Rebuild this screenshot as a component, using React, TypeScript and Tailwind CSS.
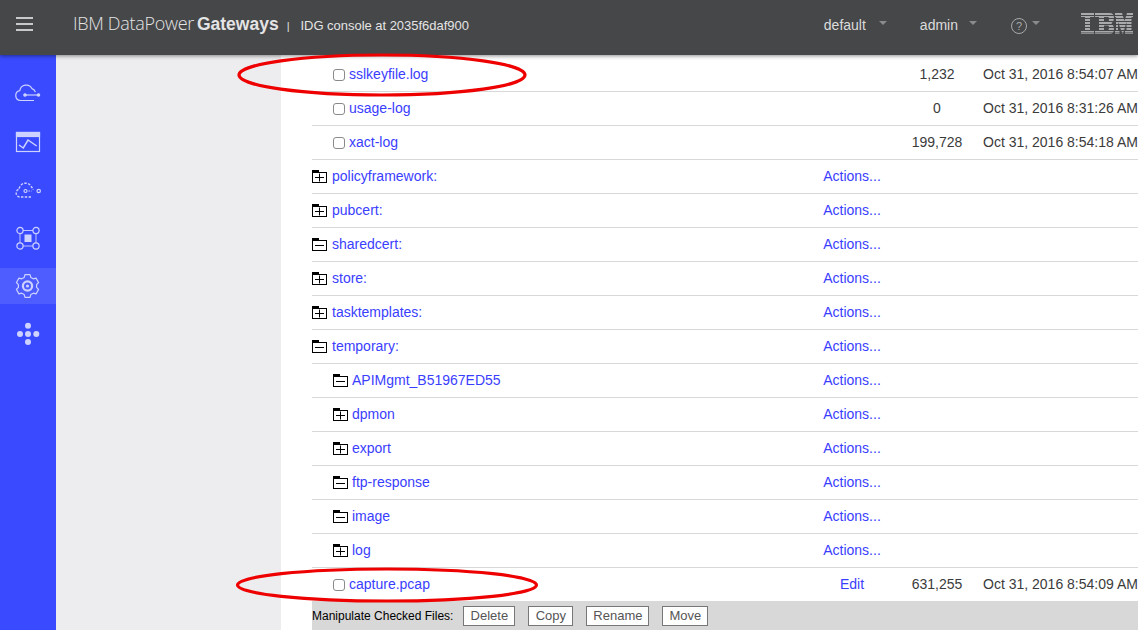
import React from "react";

const Folder = ({ open }: { open: boolean }) => (
  <svg width="15" height="13" viewBox="0 0 15 13" className="shrink-0">
    <rect x="0" y="0" width="7" height="2" fill="#000" />
    <rect x="0.5" y="2.5" width="14" height="10" fill="#fff" stroke="#000" />
    <path d="M3 7.5h9" stroke="#000" />
    {open && <path d="M7.5 3.5v8" stroke="#000" />}
  </svg>
);

type Row = { k: "file" | "dir"; n: string; indent?: number; plus?: boolean; size?: string; date?: string; action?: string };

const rows: Row[] = [
  { k: "file", n: "sslkeyfile.log", size: "1,232", date: "Oct 31, 2016 8:54:07 AM" },
  { k: "file", n: "usage-log", size: "0", date: "Oct 31, 2016 8:31:26 AM" },
  { k: "file", n: "xact-log", size: "199,728", date: "Oct 31, 2016 8:54:18 AM" },
  { k: "dir", n: "policyframework:", plus: true },
  { k: "dir", n: "pubcert:", plus: true },
  { k: "dir", n: "sharedcert:" },
  { k: "dir", n: "store:", plus: true },
  { k: "dir", n: "tasktemplates:", plus: true },
  { k: "dir", n: "temporary:" },
  { k: "dir", n: "APIMgmt_B51967ED55", indent: 1 },
  { k: "dir", n: "dpmon", indent: 1, plus: true },
  { k: "dir", n: "export", indent: 1, plus: true },
  { k: "dir", n: "ftp-response", indent: 1 },
  { k: "dir", n: "image", indent: 1 },
  { k: "dir", n: "log", indent: 1, plus: true },
  { k: "file", n: "capture.pcap", size: "631,255", date: "Oct 31, 2016 8:54:09 AM", action: "Edit" },
];

const SideIcon = ({ children, active }: { children: React.ReactNode; active?: boolean }) => (
  <div className="h-12 flex items-center">
    <div className={"h-9 w-full flex items-center justify-center " + (active ? "bg-[#4d5dff]" : "")}>
      <svg width="28" height="28" viewBox="0 0 28 28" fill="none" stroke="#cdd2ff" strokeWidth="1.2">
        {children}
      </svg>
    </div>
  </div>
);

const gearPath = (() => {
  const pts: string[] = [];
  const teeth = 6;
  for (let i = 0; i < teeth; i++) {
    const a = (i * Math.PI * 2) / teeth - Math.PI / 2;
    const step = Math.PI / teeth;
    const seq: [number, number][] = [
      [a - step * 0.42, 11.6],
      [a + step * 0.42, 11.6],
      [a + step * 0.7, 9.2],
      [a + step * 1.3, 9.2],
    ];
    seq.forEach(([t, r]) => {
      pts.push(`${(13.5 + r * Math.cos(t)).toFixed(2)} ${(14 + r * Math.sin(t)).toFixed(2)}`);
    });
  }
  return "M" + pts.join("L") + "Z";
})();

const Caret = ({ cls }: { cls: string }) => (
  <span className={`${cls} w-0 h-0 border-x-[4px] border-x-transparent border-t-[4px] border-t-[#8a8b8d] -translate-y-[3px]`} />
);

const IbmLogo = () => (
  <svg width="52" height="21" viewBox="0 0 52 21" className="ml-[41px] mr-[5px] -translate-y-[2px]">
    <g fill="#a9aaac">
      <path d="M0 0h13v4h-4v13h4v4H0v-4h4V4H0z" />
      <path d="M14 0h14.5q4.5 0 4.5 5 0 3.500-2.500 5.500 2.500 2 2.500 5.500 0 5-4.500 5H14v-4h4V4h-4zM23 4v4.500h4q1 0 1-2.250T27 4zM23 12.500V17h4q1 0 1-2.250t-1-2.250z" fillRule="evenodd" />
      <path d="M34 0h7l2.500 8L46 0h6v4h-1.500v13H52v4h-8v-4h1.500V9L42 21h-.5L37 9v8h1.500v4H34v-4h1V4h-1z" />
    </g>
    <g fill="#464749">
      <rect y="2" width="52" height="1" />
      <rect y="5" width="52" height="1" />
      <rect y="8" width="52" height="1" />
      <rect y="11" width="52" height="1" />
      <rect y="14" width="52" height="1" />
      <rect y="17" width="52" height="1" />
      <rect y="19.500" width="52" height="0.800" />
    </g>
  </svg>
);

export default function App() {
  return (
    <div className="w-[1138px] h-[630px] overflow-hidden relative flex flex-col bg-white font-['Liberation_Sans',Arial,sans-serif]">
      <header className="h-[55px] pb-[7px] shrink-0 bg-[#464749] flex items-center relative z-10 shadow-[0_1px_4px_rgba(0,0,0,0.45)] text-[#e4e4e4]">
        <div className="w-[68px] pl-4 flex flex-col gap-1 shrink-0">
          <span className="block w-[17px] h-[2px] bg-[#c9c9c9]" />
          <span className="block w-[17px] h-[2px] bg-[#c9c9c9]" />
          <span className="block w-[17px] h-[2px] bg-[#c9c9c9]" />
        </div>
        <div className="ml-[5px] flex items-baseline whitespace-nowrap">
          <span className="text-[18px] font-light tracking-[-0.3px] font-['Open_Sans','Liberation_Sans',sans-serif]">IBM DataPower </span>
          <span className="text-[17.5px] font-bold ml-[3px]">Gateways</span>
          <span className="text-[11px] ml-[8px] mr-[11px]">|</span>
          <span className="text-[13px] tracking-[-0.03px]">IDG console at 2035f6daf900</span>
        </div>
        <div className="ml-auto pt-[3px] flex items-center text-[14px] text-[#dcdcdc]">
          <span>default</span>
          <Caret cls="ml-[13px]" />
          <span className="ml-[33px]">admin</span>
          <Caret cls="ml-[11px]" />
          <svg width="18" height="18" viewBox="0 0 18 18" className="ml-[33px]" fill="none" stroke="#a8a9ab">
            <circle cx="9" cy="9" r="7.500" />
            <text x="9" y="13" textAnchor="middle" fontSize="11" fill="#a8a9ab" stroke="none">?</text>
          </svg>
          <Caret cls="ml-[4px]" />
          <IbmLogo />
        </div>
      </header>

      <div className="flex flex-1 min-h-0">
        <aside className="w-[56px] shrink-0 bg-[#3a4bff] pt-[15px]">
          <SideIcon>
            <path d="M20 20.500H6.500a5 5 0 0 1-.7-9.900A6.500 6.500 0 0 1 18 8.600a5 5 0 0 1 3.400 3.600" />
            <path d="M11 15h15" />
            <circle cx="11" cy="15" r="1.200" fill="#cdd2ff" />
            <circle cx="24.500" cy="15" r="1.200" fill="#cdd2ff" />
          </SideIcon>
          <SideIcon>
            <rect x="2.500" y="4.500" width="23" height="19" />
            <rect x="2.500" y="4.500" width="23" height="4" fill="#cdd2ff" />
            <path d="M5 17l4.300 3L14 12l8.700 6" strokeWidth="1.500" />
          </SideIcon>
          <SideIcon>
            <path d="M17 21H5.500a4 4 0 0 1-.4-7.800A6.500 6.500 0 0 1 17.500 11a5 5 0 0 1 1.500 3" strokeDasharray="2.400 1.400" strokeWidth="1.400" />
            <circle cx="11.500" cy="15" r="1.500" />
            <path d="M14.500 15h3" strokeDasharray="1.400 1" />
            <circle cx="24.700" cy="15" r="1.700" />
          </SideIcon>
          <SideIcon>
            <circle cx="6" cy="6.500" r="3.100" />
            <circle cx="22" cy="6.500" r="3.100" />
            <circle cx="6" cy="22" r="3.100" />
            <circle cx="22" cy="22" r="3.100" />
            <path d="M9 6.500h10M9 22h10M6 9.500v9.500M22 9.500v9.500" strokeWidth="0.900" />
            <rect x="10.500" y="10.500" width="7" height="7.500" fill="#cdd2ff" stroke="none" />
          </SideIcon>
          <SideIcon active>
            <path d={gearPath} strokeLinejoin="round" />
            <circle cx="13.500" cy="14" r="4.600" strokeWidth="2.200" />
            <circle cx="13.500" cy="14" r="1.600" fill="#cdd2ff" stroke="none" />
          </SideIcon>
          <SideIcon>
            <g fill="#cdd2ff" stroke="none">
              <circle cx="14" cy="5.700" r="3" />
              <circle cx="14" cy="14" r="3" />
              <circle cx="14" cy="22" r="3" />
              <circle cx="6" cy="14" r="3" />
              <circle cx="22.300" cy="14" r="3" />
            </g>
          </SideIcon>
        </aside>

        <div className="w-[225px] shrink-0 bg-[#ededf0]" />

        <main className="flex-1 min-w-0 pl-[31px] pt-[3px] overflow-hidden text-[14px] text-[#3b3b3b]">
          {rows.map((r) => (
            <div
              key={r.n}
              className={
                "grid grid-cols-[500px_80px_90px_1fr] items-center whitespace-nowrap " +
                (r.n === "capture.pcap" ? "h-[33px]" : "h-[34px] border-b border-[#d8d8d8]")
              }
            >
              <div className={"flex items-center " + (r.k === "file" ? "pl-[21px] gap-[4px]" : r.indent ? "pl-[21px] gap-[4px]" : "gap-[5px]")}>
                {r.k === "file" ? (
                  <span className="w-[12px] h-[12px] rounded-[3px] border border-[#8a8a8a] bg-white shrink-0" />
                ) : (
                  <Folder open={!!r.plus} />
                )}
                <span className="text-[#3a3eff]">{r.n}</span>
              </div>
              <div className="text-center text-[#3a3eff]">{r.action ?? (r.k === "dir" ? "Actions..." : "")}</div>
              <div className="text-center">{r.size ?? ""}</div>
              <div className="pl-[1px]">{r.date ?? ""}</div>
            </div>
          ))}
          <div className="h-[29px] bg-[#d8d8d8] flex items-center text-[12px] text-black whitespace-nowrap">
            <span>Manipulate Checked Files:</span>
            {[
              ["Delete", "ml-[10px]", "w-[52px]"],
              ["Copy", "ml-[13px]", "w-[45px]"],
              ["Rename", "ml-[13px]", "w-[63px]"],
              ["Move", "ml-[13px]", "w-[46px]"],
            ].map(([t, ml, w]) => (
              <span key={t} className={`${ml} ${w} h-[20px] flex items-center justify-center bg-white border border-[#777] text-[13px] text-[#555]`}>
                {t}
              </span>
            ))}
          </div>
        </main>
      </div>

      <svg className="absolute left-0 top-0 pointer-events-none z-20" width="1138" height="630" fill="none" stroke="#ee0000" strokeWidth="3.2">
        <ellipse cx="382" cy="75" rx="143" ry="20" />
        <ellipse cx="387" cy="585" rx="149.5" ry="16" />
      </svg>
    </div>
  );
}
